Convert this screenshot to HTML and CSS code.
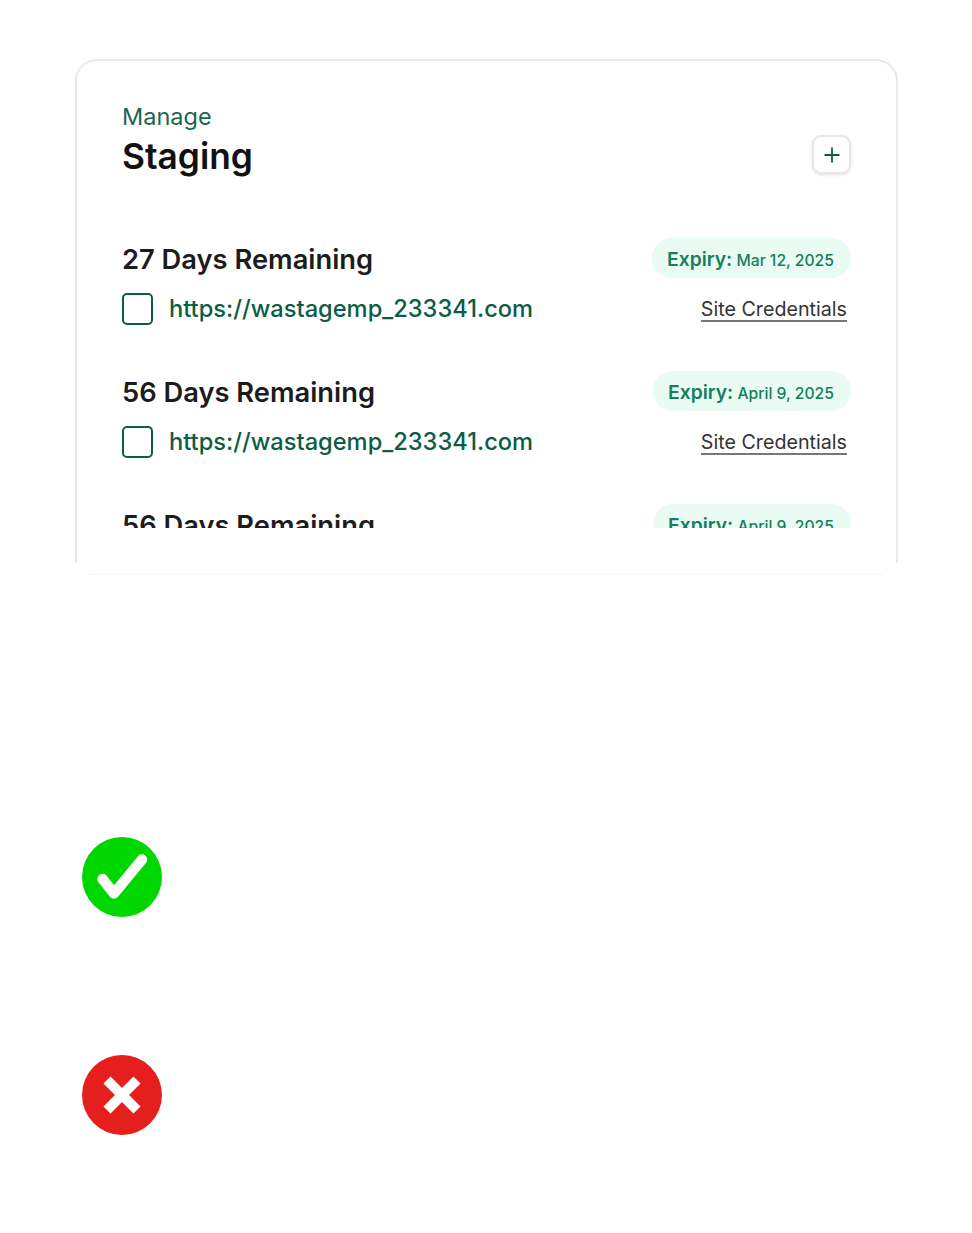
FILE: index.html
```html
<!DOCTYPE html>
<html lang="en">
<head>
<meta charset="utf-8">
<title>Manage Staging</title>
<link rel="stylesheet" href="styles.css">
</head>
<body>
<main class="page">
  <section class="card">
    <header class="card-head">
      <div>
        <p class="eyebrow">Manage</p>
        <h1 class="title">Staging</h1>
      </div>
      <button class="add" type="button" aria-label="Add">
        <svg width="16" height="16" viewBox="0 0 16 16"><path d="M8 .5v15M.5 8h15" fill="none" stroke="#0d5c46" stroke-width="1.8"/></svg>
      </button>
    </header>
    <div class="list">
      <article class="site">
        <div class="row">
          <h2 class="days">27 Days Remaining</h2>
          <p class="expiry"><b>Expiry:</b> Mar 12, 2025</p>
        </div>
        <div class="row row-link">
          <span class="check"></span>
          <span class="url">https://wastagemp_233341.com</span>
          <a class="cred">Site Credentials</a>
        </div>
      </article>
      <article class="site">
        <div class="row">
          <h2 class="days">56 Days Remaining</h2>
          <p class="expiry"><b>Expiry:</b> April 9, 2025</p>
        </div>
        <div class="row row-link">
          <span class="check"></span>
          <span class="url">https://wastagemp_233341.com</span>
          <a class="cred">Site Credentials</a>
        </div>
      </article>
      <article class="site">
        <div class="row">
          <h2 class="days">56 Days Remaining</h2>
          <p class="expiry"><b>Expiry:</b> April 9, 2025</p>
        </div>
      </article>
    </div>
  </section>
  <div class="card-foot"></div>
  <div class="status">
    <svg width="80" height="80" viewBox="0 0 80 80"><circle cx="40" cy="40" r="40" fill="#00d600"/><path d="M20.500 42 32 56.500 60 22.500" fill="none" stroke="#fff" stroke-width="10.500" stroke-linecap="round" stroke-linejoin="round"/></svg>
    <svg width="80" height="80" viewBox="0 0 80 80"><circle cx="40" cy="40" r="40" fill="#e51e1e"/><path d="M25 25 55 55M55 25 25 55" fill="none" stroke="#fff" stroke-width="10"/></svg>
  </div>
</main>
</body>
</html>
```
FILE: styles.css
```css
* { box-sizing: border-box; }
html, body { margin: 0; background: #fff; }
body { font-family: Inter, "Liberation Sans", sans-serif; }
.page { height: 1233px; padding-top: 59px; overflow: hidden; }
.card {
  margin: 0 74px 0 75px;
  height: 504px;
  padding: 41px 45px 0;
  border: 2px solid #e8e8e8;
  border-bottom: 0;
  border-radius: 22px 22px 0 0;
  display: flex;
  flex-direction: column;
}
.card-foot {
  margin: 0 90px 0 90px;
  height: 12px;
  border-bottom: 1px solid #f3f3f3;
}
.card-head { display: flex; justify-content: space-between; align-items: flex-start; }
.eyebrow { margin: 0; font-size: 23.5px; line-height: 30px; color: #1b6650; }
.title { margin: 2px 0 0; font-size: 35.3px; line-height: 46px; font-weight: 600; color: #111; }
.add {
  width: 39px; height: 39px; margin-top: 33px; padding: 0;
  display: flex; align-items: center; justify-content: center;
  background: #fff; border: 2px solid #e8e8e8; border-radius: 9px;
  box-shadow: 0 1px 3px rgba(0,0,0,.12);
}
.list { margin-top: 58px; height: 290px; overflow: hidden; }
.site { height: 133px; }
.row { display: flex; align-items: center; justify-content: space-between; height: 40px; }
.row-link { margin-top: 15px; justify-content: flex-start; height: 32px; padding-right: 4px; }
.days { margin: 2px 0 0; font-size: 27.3px; font-weight: 600; color: #1c1c1c; }
.expiry {
  margin: 0; height: 40px; padding: 0 17px 0 15px; border-radius: 20px;
  background: #e9fbf3; color: #12805c; font-size: 15.7px; font-weight: 500;
  line-height: 42px; white-space: nowrap;
}
.expiry b { font-size: 19.3px; font-weight: 600; }
.check { width: 31px; height: 32px; flex: none; border: 2px solid #0d5c46; border-radius: 5px; }
.url { margin: 0 0 2px 16px; font-size: 23.67px; font-weight: 500; color: #0d5c46; }
.cred {
  align-self: flex-start; margin: 5px 0 0 auto;
  font-size: 19.7px; line-height: 22px; color: #333;
  border-bottom: 2px solid #777;
}
.status { display: flex; flex-direction: column; gap: 138px; margin: 262px 0 0 82px; }
.status svg { display: block; }
```
